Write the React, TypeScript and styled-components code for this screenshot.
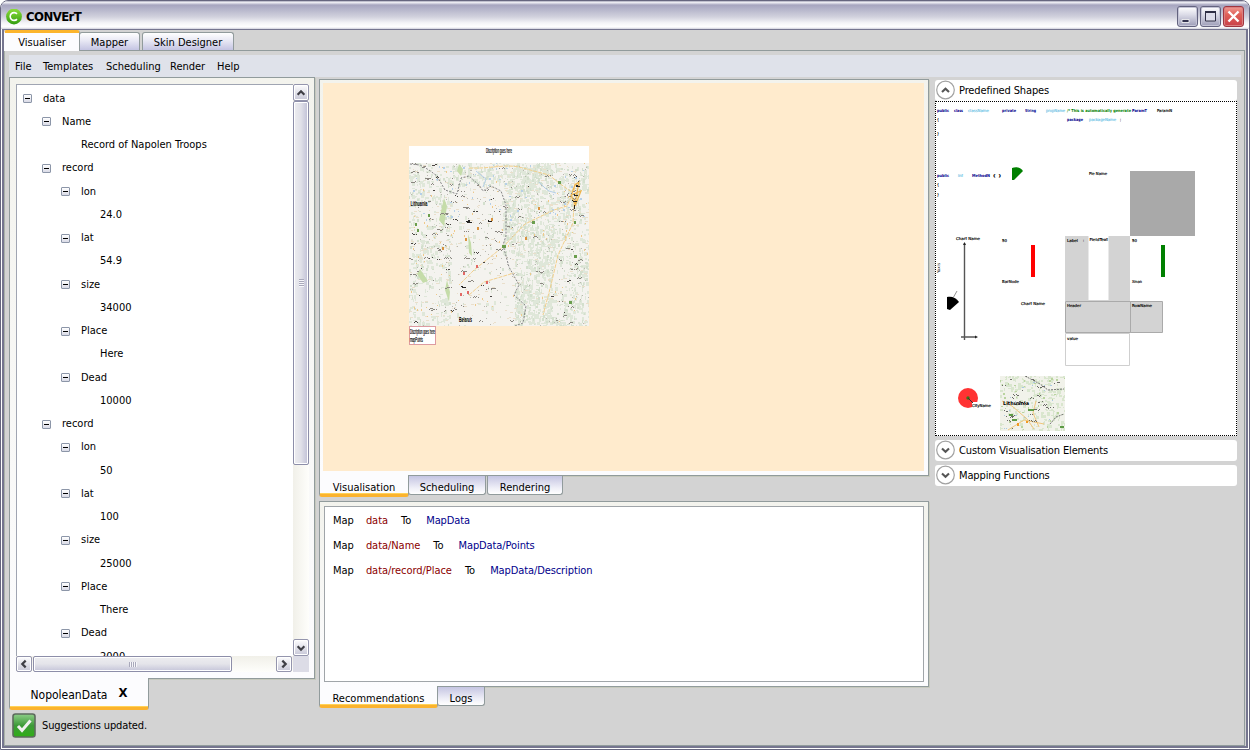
import React from "react";
import styled, { createGlobalStyle, css } from "styled-components";

const Global = createGlobalStyle`
  body { margin: 0; background: #fff; }
  * { box-sizing: border-box; }
`;

const LINE = "#919b9c";

const Window = styled.div`
  width: 1250px; height: 750px; border: 1px solid #66667f; border-radius: 8px 8px 0 0;
  background: #fff; display: flex; flex-direction: column; overflow: hidden;
  font: 11px/14px "DejaVu Sans Condensed", "DejaVu Sans", sans-serif; font-stretch: condensed; color: #000;
  white-space: nowrap;
`;
const TitleBar = styled.header`
  height: 28px; flex: none; display: flex; align-items: center; padding: 3px 5px 0 5px;
  background: linear-gradient(#8c8ca4 0, #f4f4f8 1px, #e0e0ea 2px, #a6a5bf 4px, #b4b4ca 8px, #d2d2de 16px, #f4f4f7 22px, #fff 26px, #d0d0dc 28px);
`;
const Title = styled.h1`
  flex: 1; margin: 0 0 0 4px; font: bold 13px/16px "DejaVu Sans Condensed", sans-serif; font-stretch: condensed; letter-spacing: -0.55px;
`;
const WinButtons = styled.div`display: flex; gap: 2px;`;
const WinButton = styled.button<{ $close?: boolean }>`
  width: 21px; height: 21px; padding: 0; border-radius: 3px; display: block;
  border: 1px solid ${p => (p.$close ? "#a03540" : "#63637f")};
  background: ${p => p.$close
    ? "linear-gradient(#f09a94, #e06058 40%, #c9414a)"
    : "linear-gradient(#fff, #dcdce8 40%, #9d9db8)"};
  box-shadow: inset 0 0 0 1px ${p => (p.$close ? "#d98080" : "#c4c4d6")};
  svg { display: block; }
`;
const Body = styled.div`
  flex: 1; margin: 0 1px 1px; border: 2px solid #75758f; border-top-width: 1px; background: #d3d3d3;
  display: flex; flex-direction: column; padding: 0 1px 0 0;
`;
const TopTabs = styled.div`display: flex; align-items: flex-end; height: 20px; flex: none;`;
const TopTab = styled.div<{ $on?: boolean; $w: number }>`
  width: ${p => p.$w}px; display: flex; align-items: center; justify-content: center;
  border: 1px solid ${LINE}; border-bottom: 0; border-radius: 3px 3px 0 0; margin-right: ${p => (p.$on ? -1 : 2)}px;
  ${p => p.$on ? css`
    height: 21px; margin-bottom: -1px; padding-top: 1px; border-top: 3px solid #fcb52c; border-left-color: #fcfcfe; background: #fcfcfe; z-index: 1;
  ` : css`height: 18px; padding-top: 3px; background: linear-gradient(#fff, #e8e8f4 45%, #c4c4e2);`}
`;
const Page = styled.div`
  flex: 1; border: 1px solid ${LINE}; border-left-color: #a9b2a9; padding: 4px 3px 0 4px; min-height: 0;
`;
const MenuBar = styled.nav`
  height: 22px; display: flex; align-items: center; gap: 12px; padding: 2px 0 0 6px; background: #dfe2ea;
`;
const MenuItem = styled.span<{ $w: number }>`width: ${p => p.$w}px;`;
const Columns = styled.div`display: flex; align-items: flex-start;`;
const LeftColumn = styled.section`width: 306px; margin-right: 4px;`;
const MidColumn = styled.section`width: 610px; padding-top: 2px; margin-right: 6px;`;
const RightColumn = styled.aside`width: 302px; padding-top: 3px;`;
const Panel = styled.div<{ $h: number; $pad: number }>`
  height: ${p => p.$h}px; padding: ${p => p.$pad}px; border: 1px solid ${LINE};
  background: linear-gradient(#f3f3ed, #fcfcfe); box-shadow: 1px 1px 0 #c6c9bd;
`;
const VisualPanel = styled(Panel)`padding: 3px 4px 4px 3px;`;
const ScrollBox = styled.div`display: grid; grid-template: 572px 16px / 277px 16px;`;
const Tree = styled.ul`
  margin: 0; padding: 2px 0 0; list-style: none; overflow: hidden; background: #fff;
  border-left: 1px solid #a0a5b2; border-top: 1px solid #a0a5b2;
`;
const TreeRow = styled.li<{ $depth: number }>`
  height: 23.26px; display: flex; align-items: center; gap: 11px;
  padding-left: ${p => 6 + p.$depth * 19}px;
`;
const Toggle = styled.span`
  width: 9px; height: 9px; border: 1px solid #8c96a8; border-radius: 1px; flex: none;
  background: linear-gradient(#fff, #d9dae6); display: flex; align-items: center; justify-content: center;
  &::before { content: ""; width: 5px; height: 1px; background: #000; }
`;
const ToggleGap = styled.span`width: 9px; flex: none;`;
const Track = styled.div<{ $row?: boolean }>`
  display: flex; flex-direction: ${p => (p.$row ? "row" : "column")}; padding-right: ${p => (p.$row ? 1 : 0)}px;
  background: linear-gradient(${p => (p.$row ? "180deg" : "90deg")}, #f1f0e9, #fefefb);
`;
const ScrollButton = styled.button`
  width: 16px; height: 17px; flex: none; padding: 0; border: 1px solid #9495ad; border-radius: 2px;
  background: linear-gradient(#fdfdfe, #e2e2ea 50%, #c8c8d8); box-shadow: inset 0 0 0 1px #fff;
  svg { display: block; }
`;
const SideButton = styled(ScrollButton)`height: 16px;`;
const Thumb = styled.div<{ $row?: boolean; $len: number }>`
  flex: none; display: flex; align-items: center; justify-content: center;
  border: 1px solid #8d8ea9; border-radius: 2px; box-shadow: inset 0 0 0 1px #fff;
  ${p => p.$row
    ? css`width: ${p.$len}px; height: 16px; margin-left: 1px; background: linear-gradient(#ededf0, #e4e4ea 50%, #c5c5d9);`
    : css`height: ${p.$len}px; width: 16px; background: linear-gradient(90deg, #ededf0, #e0e0e8 50%, #c0c0d6);`}
`;
const Grip = styled.span<{ $row?: boolean }>`
  width: ${p => (p.$row ? 8 : 5)}px; height: ${p => (p.$row ? 5 : 8)}px;
  background: repeating-linear-gradient(${p => (p.$row ? "90deg" : "180deg")}, #a9a9bb 0 1px, #f6f6fa 1px 2px);
`;
const Fill = styled.div`flex: 1;`;
const Corner = styled.div`background: #dcdce6;`;
const BottomTabs = styled.div`display: flex; align-items: flex-start; margin-top: -1px; position: relative;`;
const BottomTab = styled.div<{ $on?: boolean; $w: number; $h: number }>`
  width: ${p => p.$w}px; height: ${p => p.$h}px; display: flex; align-items: center; justify-content: center;
  border: 1px solid ${LINE}; border-top: 0; border-radius: 0 0 3px 3px;
  ${p => p.$on
    ? css`background: #fcfcfe; border-bottom: 3px solid #fbb32e; box-shadow: inset 0 -1px 0 #ffd257; padding-top: 6px; margin-right: -1px;`
    : css`margin: 1px 1px 0 0; padding-top: 5px; background: linear-gradient(#c5c5e2, #eeeef7 65%, #fff);`}
`;
const FileTab = styled(BottomTab)`font-size: 12px; padding-top: 4px; gap: 11px;`;
const CloseMark = styled.b`font-size: 13px; line-height: 14px; padding-bottom: 3px;`;
const Canvas = styled.div`
  height: 388px; background: #ffebcd; padding: 63px 0 0 86px;
  svg { display: block; }
`;
const RuleBox = styled.div`
  height: 176px; border: 1px solid #a0a5a9; background: #fff; padding: 1px 0 0 8px;
`;
const Rule = styled.div`height: 25px; display: flex; align-items: center; gap: 13px;`;
const From = styled.span`color: #8b0000; margin-left: -1px; letter-spacing: -0.05px;`;
const To = styled.span`color: #00008b; margin-left: 2px; letter-spacing: -0.1px;`;
const Gap = styled.div`height: 4px;`;
const Expander = styled.button<{ $open?: boolean }>`
  width: 302px; height: 21px; margin: 0 0 ${p => (p.$open ? 0 : 4)}px; padding: 0 0 0 1px; border: 0; border-radius: 3px; background: #fff;
  display: flex; align-items: center; gap: 4px; font: inherit; font-stretch: condensed; color: #000; letter-spacing: -0.13px;
  svg { flex: none; }
`;
const Shapes = styled.div`
  height: 335px; border: 1px dotted #000; background: #fff; margin-bottom: 4px;
  svg { display: block; }
`;
const Status = styled.footer`display: flex; align-items: center; gap: 6px; padding: 3px 0 0 3px; letter-spacing: -0.15px;`;

const nodes: [number, string, boolean][] = [
  [0, "data", true], [1, "Name", true], [2, "Record of Napolen Troops", false],
  [1, "record", true], [2, "lon", true], [3, "24.0", false], [2, "lat", true], [3, "54.9", false],
  [2, "size", true], [3, "34000", false], [2, "Place", true], [3, "Here", false], [2, "Dead", true], [3, "10000", false],
  [1, "record", true], [2, "lon", true], [3, "50", false], [2, "lat", true], [3, "100", false],
  [2, "size", true], [3, "25000", false], [2, "Place", true], [3, "There", false], [2, "Dead", true], [3, "2000", false],
];

const Arrow = ({ turn }: { turn: number }) => (
  <svg width="14" height="14" viewBox="0 0 14 15">
    <path d="M3.4 9.3 L7 5.7 L10.6 9.3" transform={`rotate(${turn} 7 7.5)`} fill="none" stroke="#3f3f46" strokeWidth="2.4" />
  </svg>
);

const Chevron = ({ up }: { up?: boolean }) => (
  <svg width="19" height="21" viewBox="0 0 19 21">
    <circle cx="9.5" cy="10" r="8.8" fill="#fff" stroke="#a2a2a2" strokeWidth="1.2" />
    <path d={up ? "M6 12 L9.5 8.7 L13 12" : "M6 8.4 L9.5 11.7 L13 8.4"} fill="none" stroke="#555" strokeWidth="2.1" />
  </svg>
);

function random(seed: number) {
  let s = seed;
  return () => {
    s = (s * 1664525 + 1013904223) % 4294967296;
    return s / 4294967296;
  };
}

function specks(seed: number, count: number, w: number, h: number, mw: number, mh: number, keep: (x: number, y: number) => number) {
  const r = random(seed);
  let d = "";
  for (let i = 0; i < count; i++) {
    const x = Math.floor(r() * w), y = Math.floor(r() * h);
    const a = Math.min(1 + Math.floor(r() * mw), w - x), b = Math.min(1 + Math.floor(r() * mh), h - y);
    if (r() < keep(x, y)) d += `M${x} ${y}h${a}v${b}h-${a}z`;
  }
  return d;
}

const wooded = (x: number, y: number) => {
  const patch = (Math.sin(x / 9 + y / 17) + Math.sin(y / 11 - x / 23) + 2) / 4;
  if (x < 42) return 0.12 + patch * 0.35;
  if (x < 94 + (y > 90 ? 12 : 0)) return y < 22 ? 0.4 : 0.03;
  if (x > 142) return 0.15 + patch * 0.5;
  return 0.35 + patch * 0.7;
};

// Place names are too small to read on the map: each one is a short run of dots.
const labels = (seed: number, count: number, w: number, h: number, longest = 8) => {
  const r = random(seed);
  let d = "";
  for (let i = 0; i < count; i++) {
    const x = Math.floor(r() * (w - 10)), y = Math.floor(r() * (h - 3)), n = 3 + Math.floor(r() * (longest - 2));
    if (x > 90 && x < 148 && r() < 0.75) continue;
    for (let k = 0; k < n; k++) if (r() < 0.65) d += `M${x + k} ${y + Math.floor(r() * 2)}h1v1h-1z`;
  }
  return d;
};

const BigMap = () => (
  <svg width="180" height="199" viewBox="0 0 180 199" fontFamily="Liberation Sans, sans-serif">
    <rect width="180" height="17" fill="#fff" />
    <text x="77" y="7" fontSize="6.5" stroke="#000" strokeWidth="0.2" textLength="26" lengthAdjust="spacingAndGlyphs">Discription goes here</text>
    <svg y="17" width="180" height="163" shapeRendering="crispEdges">
      <rect width="180" height="163" fill="#f4f3ef" />
      <path d={specks(11, 5600, 180, 163, 3, 4, wooded)} fill="#dfe7d9" />
      <path d={specks(91, 1500, 180, 163, 2, 3, wooded)} fill="#d3dfcd" />
      <path d={specks(5, 420, 180, 163, 3, 1, () => 0.8)} fill="#eadfcb" />
      <path d={specks(13, 260, 180, 163, 1, 1, () => 0.8)} fill="#b9b8b0" />
      <path d={specks(7, 120, 180, 163, 1, 2, (x) => (x < 50 || x > 140 ? 1 : 0.5))} fill="#efc98a" />
      <path d={specks(8, 90, 180, 60, 2, 2, () => 0.7)} fill="#b5cfe8" />
      <g shapeRendering="auto" fill="none">
        <path d="M50 1l4 5-2 7-4-5zM35 35l3 8-3 20-5-6zM59 71l3 9 1 13-3-3zM11 106l8 12-5 2-6-9zM38 117l3 12-1 10-4-12z" fill="#c5dca9" />
        <path d="M60 5C80 6 95 1 110 4L140 12 150 20 164 30 158 43 145 47 116 61 95 83 65 107 50 122M60 132l15-13 30-9M166 20l-2 40-15 32-7 30-8 30" stroke="#f2cf8c" strokeWidth="1" strokeDasharray="4 1" />
        <path d="M130 19l6 6 4 3 7 2M67 8l10 8-3 8" stroke="#b5cfe8" />
        <path d="M1 1l10 1 9 5 8 6 8 14 12 4 4-16 8-2 10 9 4 6 8-5 10 5 5 14v31l-3 9 6 22 10 18-5 10 12 11-3 17-8 3" stroke="#77777a" strokeWidth="0.9" strokeDasharray="2 1.4" />
        <path d="M163 30l3-8 4-3-4 22-4-9 10-4-6 15" stroke="#edb54f" strokeWidth="1.3" />
      </g>
      <path d={labels(31, 135, 180, 163)} fill="#8a8680" />
      <path d={labels(67, 42, 180, 163, 5)} fill="#4a4643" />
      <path d="M167 22h2v1h2v1h-4zM165 31h1v1h3v1h-4zM163 37h1v1h4v1h-4zM165 42h1v4h-1zM52 123h2v1h3v1h-4zM57 58h2v-1h2v2h2v1h-5zM79 57h1v1h3v1h-4z" fill="#252321" />
      <path d="M93 82h4v3h-4zM123 58h3v3h-3zM149 18h3v3h-3zM165 58h2v3h-2zM165 92h3v3h-3zM160 138h3v3h-3zM6 60h2v3h-2zM8 66h2v3h-2zM19 51h2v3h-2z" fill="#6a9e4d" />
      <path d="M67 102h2v3h-2zM54 109h2v3h-2zM77 118h2v3h-2zM58 128h2v3h-2zM51 130h2v3h-2z" fill="#e26864" />
      <path d="M129 44h2v3h-2zM116 74h2v3h-2zM68 64h2v3h-2zM56 75h2v3h-2zM33 84h2v3h-2zM82 55h2v3h-2z" fill="#d99340" />
    </svg>
    <text x="1.500" y="60" fontSize="7" fontWeight="bold" textLength="17" lengthAdjust="spacingAndGlyphs">Lithuania</text>
    <text x="50" y="176" fontSize="6.500" fontWeight="bold" textLength="13" lengthAdjust="spacingAndGlyphs">Belarus</text>
    <rect x="0.500" y="180.500" width="26" height="18" fill="#fff" stroke="#dd9ba0" />
    <g stroke="#000" strokeWidth="0.2">
      <text x="1" y="188" fontSize="6.5" textLength="25" lengthAdjust="spacingAndGlyphs">Discription goes here</text>
      <text x="1" y="196" fontSize="6.5" textLength="13" lengthAdjust="spacingAndGlyphs">mapPoints</text>
    </g>
  </svg>
);

const NAVY = "#00008b", SKY = "#6cc3e6";
const shapeLabels: [number, number, number, string, string, boolean?][] = [
  [1, 10, 12, "public", NAVY, true], [18, 10, 9, "class", NAVY, true], [32, 10, 21, "className", SKY],
  [66, 10, 14, "private", NAVY, true], [89, 10, 11, "String", NAVY, true], [110, 10, 19, "propName", SKY],
  [131, 10, 64, "/* This is automatically generate", "#008000", true], [196, 10, 15, "ParamT", NAVY, true], [221, 10, 15, "ParamN", "#000"],
  [1, 19, 2, "{", "#000"], [131, 19, 16, "package", NAVY, true], [153, 19, 27, "packageName", SKY], [184, 19, 1, ";", "#000"],
  [1, 33, 2, "}", "#000"], [1, 75, 12, "public", NAVY, true], [22, 75, 5, "int", SKY], [36, 75, 18, "MethodN", NAVY, true],
  [57, 75, 8, "(  )", "#000"], [153, 73, 18, "Pie Name", "#000"], [1, 84, 2, "{", "#000"], [1, 94, 2, "}", "#000"],
  [20, 138, 24, "Chart Name", "#000"], [66, 140, 5, "50", "#000"], [131, 140, 11, "Label", "#000"], [147, 140, 1, ":", "#000"],
  [153.500, 139, 18.500, "FieldText", "#000"], [196, 140, 5, "50", "#000"], [66, 181, 17, "BarNode", "#000"],
  [196, 181, 10, "Xman", "#000"], [85, 203, 24, "Chart Name", "#000"], [131, 205, 14, "Header", "#000"], [196, 205, 20, "RowName", "#000"],
  [131, 238, 11, "value", "#000"],
];

const ShapeSheet = () => (
  <svg width="300" height="333" viewBox="0 0 300 333" fontFamily="DejaVu Sans, sans-serif">
    <path d="M76 66C81 64 85 66 87 69L78 78H76z" fill="#008000" />
    <rect x="194" y="69" width="65" height="65" fill="#a9a9a9" />
    <path d="M129 134h65v65h-65z" fill="#d3d3d3" />
    <path d="M152.500 134h20v64h-20z" fill="#fff" />
    <path d="M95 143h4v32h-4z" fill="#f00" />
    <path d="M225 143h4v32h-4z" fill="#008000" />
    <path d="M129.500 199.500h65v31h-65zM194.500 199.500h32v31h-32z" fill="#d3d3d3" stroke="#aaa" />
    <path d="M129.500 231.500h64v32h-64z" fill="#fff" stroke="#cfcfcf" />
    <path d="M28.500 141v97M25 235h15" stroke="#555" strokeWidth="1.400" fill="none" />
    <path d="M27 143h3l-1.500-3zM39 233.500v3l3-1.500z" fill="#222" />
    <path d="M11 195C17 194 20 196 23 200L14 208 11 207z" fill="#000" />
    <path d="M17 196l4-7" stroke="#777" strokeWidth="0.800" />
    <text transform="translate(4 171) rotate(-90)" fontSize="4" textLength="10" lengthAdjust="spacingAndGlyphs">Yaxis</text>
    <circle cx="32" cy="296" r="10" fill="#f33" />
    <path d="M36 300h18v6h-18z" fill="#fff" />
    <circle cx="32" cy="296" r="1.700" fill="#367a16" />
    <path d="M32 296l5 5" stroke="#333" />
    <text x="36" y="305" fontSize="4" stroke="#000" strokeWidth="0.15" textLength="19" lengthAdjust="spacingAndGlyphs">CityName</text>
    {shapeLabels.map(([x, y, w, t, c, b], i) => (
      <text key={i} x={x} y={y} fill={c} stroke={c} strokeWidth={b ? 0 : 0.15} fontSize="4" fontWeight={b ? "bold" : "normal"} textLength={w} lengthAdjust="spacingAndGlyphs">{t}</text>
    ))}
    <svg x="64" y="274" width="65" height="55" shapeRendering="crispEdges">
      <rect width="65" height="55" fill="#f1f2ea" />
      <path d={specks(21, 470, 65, 55, 3, 3, (x, y) => (x > 30 || y < 14 ? 0.75 : 0.25))} fill="#d9e6ce" />
      <path d={specks(22, 60, 65, 55, 2, 2, () => 0.6)} fill="#b9d49e" />
      <path d={specks(24, 26, 65, 55, 2, 1, () => 0.8)} fill="#abc9e2" />
      <path d="M2 25l10 5 15 13 7 10M36 25l-3 12 6 14M8 54l16-10 20 4" stroke="#efc67c" fill="none" shapeRendering="auto" />
      <path d="M25 0l15 8 8 6 16-1M50 48l6-7 8-3" stroke="#777" strokeDasharray="2 1" fill="none" shapeRendering="auto" />
      <path d={labels(45, 24, 65, 55)} fill="#6a6a66" />
      <path d="M9 38h4v2h-4zM12 43h5v2h-5zM28 33h6v2h-6zM60 50h4v2h-4z" fill="#5d9b45" />
      <path d="M17 47h2v3h-2zM26 45h2v2h-2z" fill="#f09a24" />
    </svg>
    <text x="67" y="302.500" fontSize="5" fontWeight="bold" textLength="26" lengthAdjust="spacingAndGlyphs">Lithuania</text>
  </svg>
);

export default function App() {
  return (
    <Window>
      <Global />
      <TitleBar>
        <svg width="16" height="16" viewBox="0 0 16 16">
          <defs><linearGradient id="logo" x1="0" y1="0" x2="0" y2="1"><stop stopColor="#8ede3a" /><stop offset="1" stopColor="#329d10" /></linearGradient></defs>
          <circle cx="8" cy="7.500" r="7.900" fill="url(#logo)" />
          <path d="M11 4.900A3.900 3.900 0 1 0 11 10.100" fill="none" stroke="#fff" strokeWidth="1.600" />
        </svg>
        <Title>CONVErT</Title>
        <WinButtons>
          <WinButton><svg width="19" height="19"><path d="M4 12.500h7v3h-7z" fill="#33334f" stroke="#fff" strokeWidth="0.800" /></svg></WinButton>
          <WinButton><svg width="19" height="19"><path d="M4.500 5h10v9h-10z" fill="#ddddea" stroke="#2f2f45" /><path d="M4 5h11" stroke="#2f2f45" strokeWidth="2" /></svg></WinButton>
          <WinButton $close><svg width="19" height="19"><path d="M4.500 4.500l10 10M14.500 4.500l-10 10" stroke="#fff" strokeWidth="2.400" /></svg></WinButton>
        </WinButtons>
      </TitleBar>
      <Body>
        <TopTabs>
          <TopTab $on $w={76}>Visualiser</TopTab>
          <TopTab $w={61}>Mapper</TopTab>
          <TopTab $w={92}>Skin Designer</TopTab>
        </TopTabs>
        <Page>
          <MenuBar>
            <MenuItem $w={16}>File</MenuItem><MenuItem $w={51}>Templates</MenuItem><MenuItem $w={52}>Scheduling</MenuItem>
            <MenuItem $w={35}>Render</MenuItem><MenuItem $w={22}>Help</MenuItem>
          </MenuBar>
          <Columns>
            <LeftColumn>
              <Panel $h={602} $pad={6}>
                <ScrollBox>
                  <Tree>
                    {nodes.map(([depth, text, parent], i) => (
                      <TreeRow key={i} $depth={depth}>{parent ? <Toggle /> : <ToggleGap />}{text}</TreeRow>
                    ))}
                  </Tree>
                  <Track>
                    <ScrollButton><Arrow turn={0} /></ScrollButton>
                    <Thumb $len={364}><Grip /></Thumb>
                    <Fill />
                    <ScrollButton><Arrow turn={180} /></ScrollButton>
                  </Track>
                  <Track $row>
                    <SideButton><Arrow turn={-90} /></SideButton>
                    <Thumb $row $len={199}><Grip $row /></Thumb>
                    <Fill />
                    <SideButton><Arrow turn={90} /></SideButton>
                  </Track>
                  <Corner />
                </ScrollBox>
              </Panel>
              <BottomTabs><FileTab $on $w={140} $h={32}>NopoleanData <CloseMark>X</CloseMark></FileTab></BottomTabs>
              <Status>
                <svg width="24" height="25" viewBox="0 0 24 25">
                  <defs><linearGradient id="ok" x1="0" y1="0" x2="0" y2="1"><stop stopColor="#8fcf8a" /><stop offset=".5" stopColor="#3d9a38" /><stop offset="1" stopColor="#2fae16" /></linearGradient></defs>
                  <rect x="1" y="1" width="22" height="23" rx="2.500" fill="url(#ok)" stroke="#5d6b5d" strokeWidth="1.600" />
                  <path d="M6 13l4 4.500L18.500 7.500" fill="none" stroke="#f0f0f0" strokeWidth="3" />
                </svg>
                Suggestions updated.
              </Status>
            </LeftColumn>
            <MidColumn>
              <VisualPanel $h={397} $pad={4}><Canvas><BigMap /></Canvas></VisualPanel>
              <BottomTabs>
                <BottomTab $on $w={90} $h={22}>Visualisation</BottomTab>
                <BottomTab $w={78} $h={19}>Scheduling</BottomTab>
                <BottomTab $w={76} $h={19}>Rendering</BottomTab>
              </BottomTabs>
              <Gap />
              <Panel $h={186} $pad={4}>
                <RuleBox>
                  <Rule>Map <From>data</From> To <To>MapData</To></Rule>
                  <Rule>Map <From>data/Name</From> To <To>MapData/Points</To></Rule>
                  <Rule>Map <From>data/record/Place</From> To <To>MapData/Description</To></Rule>
                </RuleBox>
              </Panel>
              <BottomTabs>
                <BottomTab $on $w={119} $h={22}>Recommendations</BottomTab>
                <BottomTab $w={48} $h={19}>Logs</BottomTab>
              </BottomTabs>
            </MidColumn>
            <RightColumn>
              <Expander $open><Chevron up />Predefined Shapes</Expander>
              <Shapes><ShapeSheet /></Shapes>
              <Expander><Chevron />Custom Visualisation Elements</Expander>
              <Expander><Chevron />Mapping Functions</Expander>
            </RightColumn>
          </Columns>
        </Page>
      </Body>
    </Window>
  );
}
